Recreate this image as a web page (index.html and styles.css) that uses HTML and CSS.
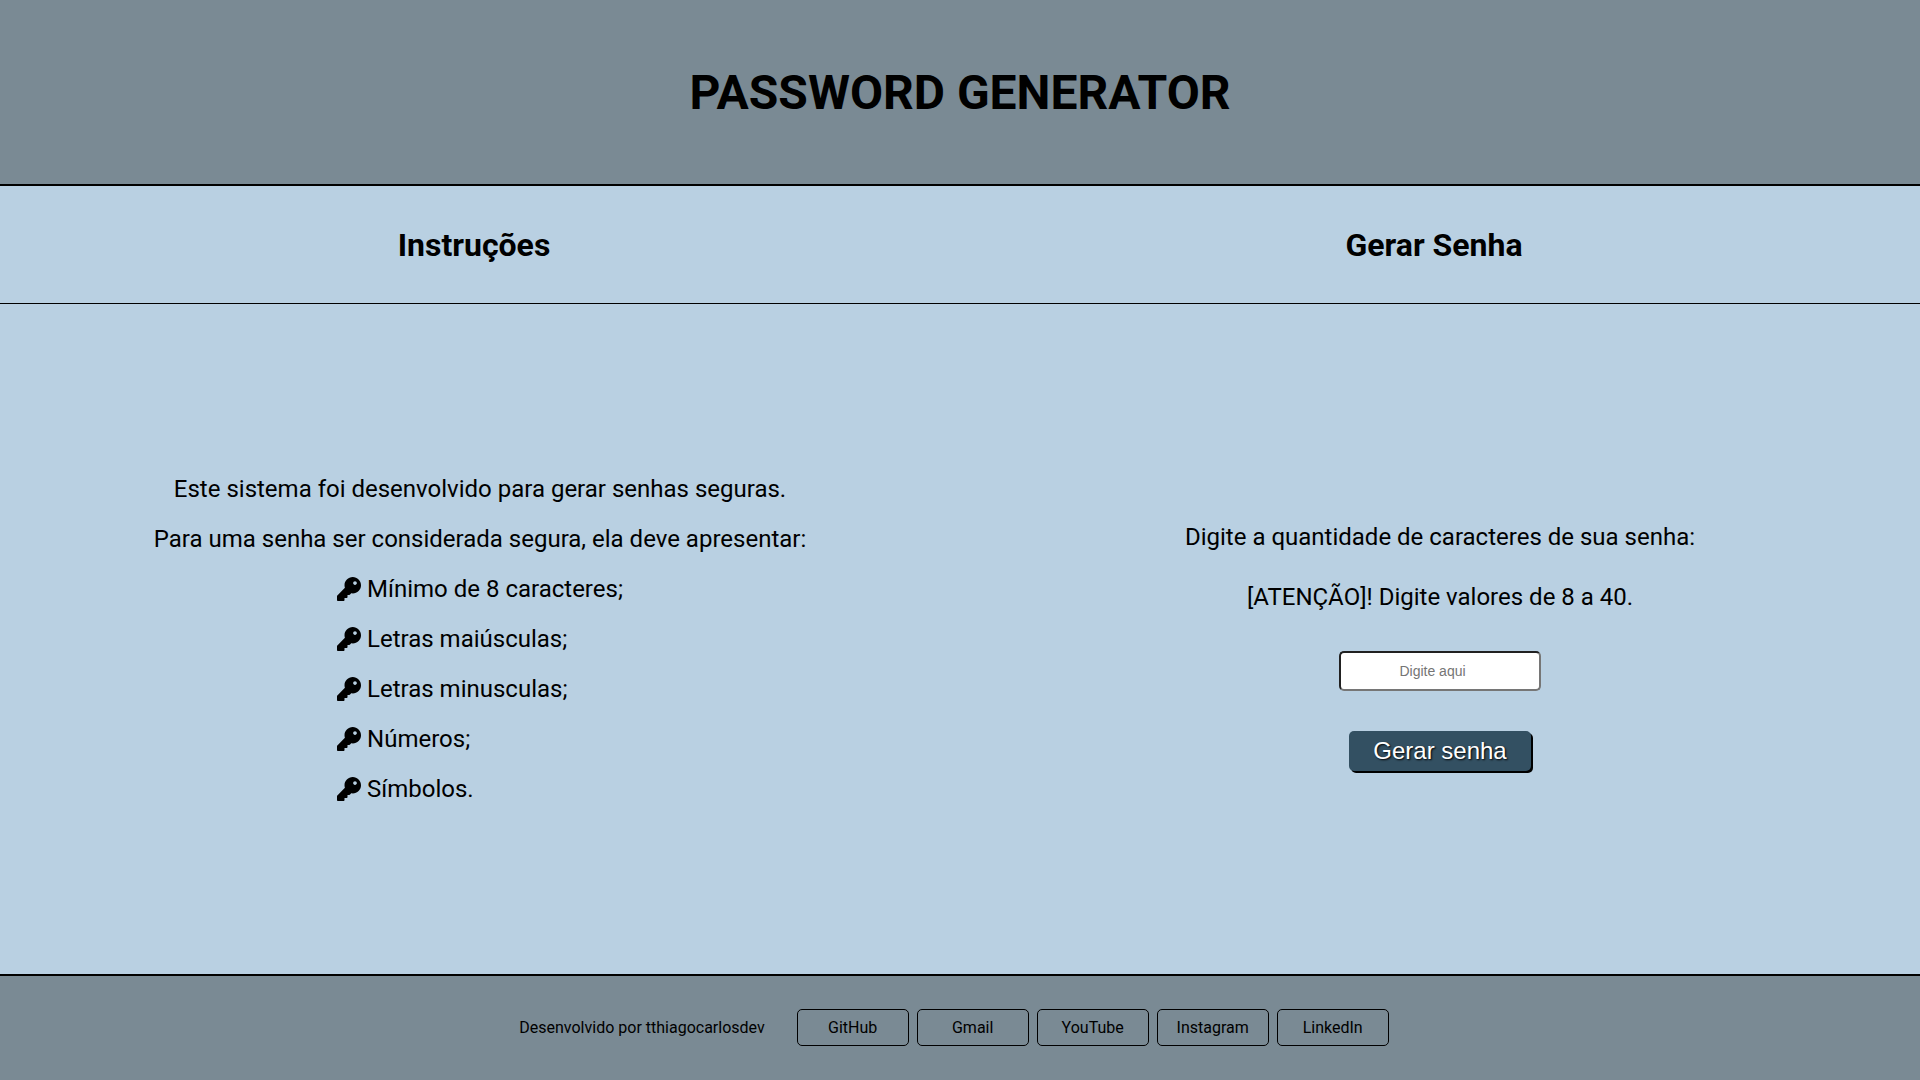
FILE: index.html
```html
<!DOCTYPE html>
<html lang="pt-BR">
<head>
  <meta charset="UTF-8">
  <meta name="viewport" content="width=device-width, initial-scale=1">
  <title>Password Generator</title>
  <link rel="stylesheet" href="styles.css">
</head>
<body>
  <svg class="sprite" aria-hidden="true">
    <symbol id="key" viewBox="0 0 512 512">
      <path d="M512 176.001C512 273.203 433.202 352 336 352c-11.22 0-22.19-1.062-32.827-3.069l-24.012 27.014A23.999 23.999 0 0 1 261.223 384H224v40c0 13.255-10.745 24-24 24h-40v40c0 13.255-10.745 24-24 24H24c-13.255 0-24-10.745-24-24v-78.059c0-6.365 2.529-12.47 7.029-16.971l161.802-161.802C163.108 213.814 160 195.271 160 176 160 78.798 238.797.001 335.999 0 433.488-.001 512 78.511 512 176.001zM344 128c0 22.091 17.909 40 40 40s40-17.909 40-40-17.909-40-40-40-40 17.909-40 40z"/>
    </symbol>
  </svg>
  <header class="header">
    <h1 class="title">PASSWORD GENERATOR</h1>
  </header>
  <div class="headings">
    <h2 class="heading">Instruções</h2>
    <h2 class="heading">Gerar Senha</h2>
  </div>
  <main class="main">
    <section class="instructions">
      <p>Este sistema foi desenvolvido para gerar senhas seguras.</p>
      <p>Para uma senha ser considerada segura, ela deve apresentar:</p>
      <ul class="rules">
        <li><svg class="key"><use href="#key"/></svg>Mínimo de 8 caracteres;</li>
        <li><svg class="key"><use href="#key"/></svg>Letras maiúsculas;</li>
        <li><svg class="key"><use href="#key"/></svg>Letras minusculas;</li>
        <li><svg class="key"><use href="#key"/></svg>Números;</li>
        <li><svg class="key"><use href="#key"/></svg>Símbolos.</li>
      </ul>
    </section>
    <form class="generator">
      <div class="prompt">
        <label for="length">Digite a quantidade de caracteres de sua senha:</label>
        <p>[ATENÇÃO]! Digite valores de 8 a 40.</p>
      </div>
      <input class="length" id="length" type="number" min="8" max="40" placeholder="Digite aqui">
      <button class="generate" type="button">Gerar senha</button>
    </form>
  </main>
  <footer class="footer">
    <p>Desenvolvido por tthiagocarlosdev</p>
    <nav class="links">
      <a class="link" href="#github">GitHub</a>
      <a class="link" href="#gmail">Gmail</a>
      <a class="link" href="#youtube">YouTube</a>
      <a class="link" href="#instagram">Instagram</a>
      <a class="link" href="#linkedin">LinkedIn</a>
    </nav>
  </footer>
</body>
</html>
```
FILE: styles.css
```css
* {
  margin: 0;
  padding: 0;
  box-sizing: border-box;
}

body {
  display: flex;
  flex-direction: column;
  min-height: 100vh;
  background: #b9d0e2;
  color: #000;
  font-family: Roboto, sans-serif;
}

.sprite {
  display: none;
}

.header {
  padding: 64px 16px 62px;
  background: #7a8a94;
  border-bottom: 2px solid #000;
  text-align: center;
}

.title {
  font-size: 48px;
  line-height: 58px;
}

.headings {
  display: grid;
  grid-template-columns: 1fr 1fr;
  border-bottom: 1px solid #000;
}

.heading {
  padding: 40px 12px 38px 0;
  font-size: 32px;
  line-height: 39px;
  text-align: center;
}

.main {
  flex: 1;
  display: grid;
  grid-template-columns: 1fr 1fr;
  font-size: 24px;
  text-align: center;
}

.instructions {
  display: flex;
  flex-direction: column;
  justify-content: center;
  align-items: center;
  line-height: 50px;
}

.rules {
  list-style: none;
}

.rules li {
  display: flex;
  align-items: center;
  gap: 6px;
}

.key {
  width: 24px;
  height: 24px;
}

.generator {
  display: flex;
  flex-direction: column;
  justify-content: center;
  align-items: center;
  gap: 40px;
  padding-top: 16px;
  line-height: 28px;
}

.prompt {
  display: flex;
  flex-direction: column;
  gap: 32px;
}

.length {
  width: 202px;
  height: 40px;
  border: 2px inset #767676;
  border-radius: 5px;
  background: #fff;
  font-family: "Liberation Sans", Arial, sans-serif;
  font-size: 14px;
  text-align: center;
}

.generate {
  height: 40px;
  padding: 0 24px;
  border: 0;
  border-radius: 5px;
  background: #335062;
  box-shadow: 2px 2px 0 #000;
  color: #fff;
  font-family: "Liberation Sans", Arial, sans-serif;
  font-size: 24px;
  text-shadow: 1px 1px 2px #000;
}

.footer {
  display: flex;
  justify-content: center;
  align-items: center;
  gap: 32px;
  padding: 33px 12px 34px 0;
  background: #7a8a94;
  border-top: 2px solid #000;
  line-height: 19px;
}

.links {
  display: flex;
  gap: 8px;
}

.link {
  width: 112px;
  padding: 8px 0;
  border: 1px solid #000;
  border-radius: 5px;
  color: #000;
  text-align: center;
  text-decoration: none;
}
```
